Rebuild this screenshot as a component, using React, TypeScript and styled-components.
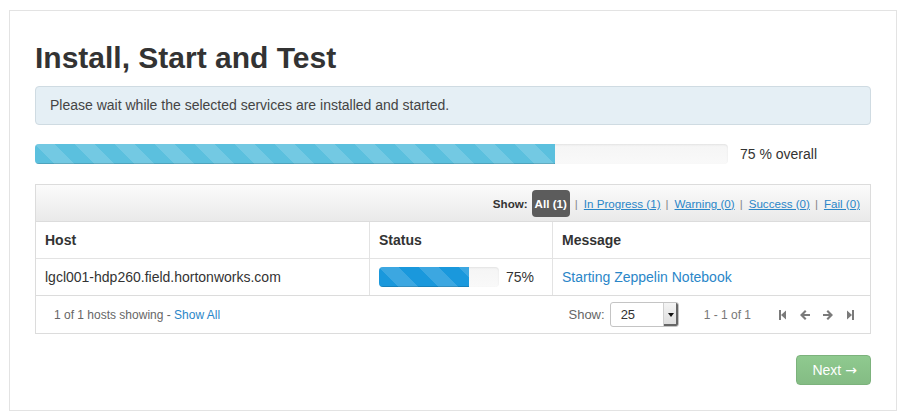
import styled, { createGlobalStyle, css } from 'styled-components';

const GlobalStyle = createGlobalStyle`
  html, body {
    margin: 0;
    padding: 0;
    background: #fff;
  }
  body {
    font-family: "Liberation Sans", Arial, sans-serif;
    font-size: 14px;
    color: #333;
  }
`;

const Page = styled.div`
  padding: 10px 9px 6px 9px;
`;

const Panel = styled.div`
  border: 1px solid #e3e3e3;
  padding: 27px 25px 25px 25px;
  display: flex;
  flex-direction: column;
`;

const Title = styled.h2`
  margin: 0 0 8px 0;
  font-size: 30px;
  line-height: 40px;
  font-weight: bold;
  color: #333;
`;

const Alert = styled.div`
  background: #e5eff5;
  border: 1px solid #cfdbe2;
  border-radius: 4px;
  padding: 8px 14px 9px 14px;
  line-height: 20px;
  font-size: 14px;
  color: #444;
`;

const OverallRow = styled.div`
  display: flex;
  align-items: center;
  margin-top: 19px;
`;

const stripes = css`
  background-image: linear-gradient(
    45deg,
    rgba(255, 255, 255, 0.15) 25%,
    transparent 25%,
    transparent 50%,
    rgba(255, 255, 255, 0.15) 50%,
    rgba(255, 255, 255, 0.15) 75%,
    transparent 75%,
    transparent
  );
  background-size: 40px 40px;
`;

const Track = styled.div<{ $width: number }>`
  width: ${(p) => p.$width}px;
  height: 20px;
  border-radius: 4px;
  overflow: hidden;
  background: linear-gradient(#f5f5f5, #f9f9f9);
  box-shadow: inset 0 1px 2px rgba(0, 0, 0, 0.08);
  flex: none;
`;

const Bar = styled.div<{ $tone: 'info' | 'primary' }>`
  height: 100%;
  ${stripes};
  background-color: ${(p) => (p.$tone === 'info' ? '#5bc0de' : '#1a98dc')};
  box-shadow: inset 0 -1px 0 rgba(0, 0, 0, 0.15);
`;

const OverallLabel = styled.span`
  margin-left: 12px;
  font-size: 14px;
  color: #333;
`;

const Box = styled.div`
  margin-top: 20px;
  border: 1px solid #dcdcdc;
`;

const FilterBar = styled.div`
  display: flex;
  justify-content: flex-end;
  align-items: center;
  height: 36px;
  padding: 0 10px;
  background: linear-gradient(#fbfbfb, #e9e9e9);
  border-bottom: 1px solid #dcdcdc;
  font-size: 11.6px;
`;

const ShowLabel = styled.span`
  font-weight: bold;
  color: #333;
  margin-right: 4px;
`;

const Badge = styled.span`
  background: #5c5c5c;
  color: #fff;
  font-weight: bold;
  border-radius: 4px;
  padding: 0 3px;
  line-height: 27px;
`;

const Sep = styled.span`
  color: #888;
  margin: 0 6px 0 5px;
`;

const FilterLink = styled.a`
  color: #2a86c8;
  text-decoration: underline;
  cursor: pointer;
`;

const Table = styled.table`
  width: 100%;
  border-collapse: collapse;
  table-layout: fixed;
`;

const Th = styled.th<{ $w?: number }>`
  ${(p) => p.$w && `width: ${p.$w}px;`}
  text-align: left;
  font-weight: bold;
  font-size: 14px;
  line-height: 20px;
  padding: 8px 8px 8px 9px;
  border-bottom: 1px solid #e3e3e3;
  & + & {
    border-left: 1px solid #e3e3e3;
  }
`;

const Td = styled.td`
  font-size: 14px;
  line-height: 20px;
  padding: 8px 8px 8px 9px;
  border-bottom: 1px solid #dcdcdc;
  vertical-align: middle;
  & + & {
    border-left: 1px solid #e3e3e3;
  }
`;

const StatusCell = styled.div`
  display: flex;
  align-items: center;
  gap: 7px;
`;

const MsgLink = styled.a`
  color: #2a86c8;
  text-decoration: none;
`;

const Footer = styled.div`
  display: flex;
  align-items: center;
  height: 37px;
  padding: 0 16px 0 18px;
  font-size: 12px;
  color: #666;
`;

const FooterInfo = styled.div`
  flex: 1;
`;

const ShowAll = styled.a`
  color: #2a86c8;
  text-decoration: none;
`;

const SelectWrap = styled.div`
  display: flex;
  align-items: center;
  gap: 5px;
  font-size: 13px;
  color: #666;
`;

const Select = styled.div`
  width: 67px;
  height: 23px;
  border: 1px solid #c4c4c4;
  border-radius: 3px;
  display: flex;
  align-items: stretch;
  background: #fff;
  overflow: hidden;
`;

const SelectValue = styled.span`
  flex: 1;
  padding-left: 10px;
  line-height: 24px;
  font-size: 13px;
  color: #333;
`;

const SelectArrow = styled.span`
  width: 14px;
  background: linear-gradient(#f4f4f4, #dcdcdc);
  border-left: 1px solid #d0d0d0;
  box-shadow: inset -2px -2px 0 #666;
  display: flex;
  align-items: center;
  justify-content: center;
  &::after {
    content: '';
    border-left: 3px solid transparent;
    border-right: 3px solid transparent;
    border-top: 4px solid #111;
  }
`;

const Range = styled.span`
  margin-left: 25px;
  margin-right: 28px;
  color: #777;
  font-size: 12px;
`;

const Pager = styled.div`
  display: flex;
  align-items: center;
  gap: 13px;
  color: #7a7a7a;
  & svg {
    display: block;
  }
`;

const Actions = styled.div`
  display: flex;
  justify-content: flex-end;
  margin-top: 21px;
`;

const NextButton = styled.button`
  font-family: inherit;
  font-size: 14px;
  line-height: 20px;
  color: #fff;
  background: linear-gradient(#8fca8f, #84bc84);
  border: 1px solid #7cb27c;
  border-radius: 4px;
  padding: 4px 13px 4px 15px;
  cursor: default;
  display: flex;
  align-items: center;
  gap: 4px;
`;

const Arrow = styled.span`
  font-family: "DejaVu Sans", sans-serif;
  font-size: 14px;
`;

const IconFirst = () => (
  <svg width="8" height="10" viewBox="0 0 8 10">
    <rect x="0" y="0" width="2" height="10" fill="currentColor" />
    <path d="M2 5 L7 0.5 V9.5 Z" fill="currentColor" />
  </svg>
);

const IconLast = () => (
  <svg width="8" height="10" viewBox="0 0 8 10">
    <rect x="6" y="0" width="2" height="10" fill="currentColor" />
    <path d="M6 5 L1 0.5 V9.5 Z" fill="currentColor" />
  </svg>
);

const IconPrev = () => (
  <svg width="10" height="10" viewBox="0 0 10 10">
    <path d="M0 5 L5 0 L6.5 1.5 L4 4 H10 V6 H4 L6.5 8.5 L5 10 Z" fill="currentColor" />
  </svg>
);

const IconNext = () => (
  <svg width="10" height="10" viewBox="0 0 10 10">
    <path d="M10 5 L5 0 L3.5 1.5 L6 4 H0 V6 H6 L3.5 8.5 L5 10 Z" fill="currentColor" />
  </svg>
);

const filters = [
  { label: 'In Progress (1)' },
  { label: 'Warning (0)' },
  { label: 'Success (0)' },
  { label: 'Fail (0)' },
];

const hosts = [
  {
    name: 'lgcl001-hdp260.field.hortonworks.com',
    progress: 75,
    message: 'Starting Zeppelin Notebook',
  },
];

export default function App() {
  return (
    <>
      <GlobalStyle />
      <Page>
        <Panel>
          <Title>Install, Start and Test</Title>
          <Alert>Please wait while the selected services are installed and started.</Alert>
          <OverallRow>
            <Track $width={693}>
              <Bar $tone="info" style={{ width: '75%' }} />
            </Track>
            <OverallLabel>75 % overall</OverallLabel>
          </OverallRow>

          <Box>
            <FilterBar>
              <ShowLabel>Show:</ShowLabel>
              <Badge>All (1)</Badge>
              {filters.map((f) => (
                <span key={f.label}>
                  <Sep>|</Sep>
                  <FilterLink>{f.label}</FilterLink>
                </span>
              ))}
            </FilterBar>
            <Table>
              <thead>
                <tr>
                  <Th $w={316}>Host</Th>
                  <Th $w={165}>Status</Th>
                  <Th>Message</Th>
                </tr>
              </thead>
              <tbody>
                {hosts.map((h) => (
                  <tr key={h.name}>
                    <Td>{h.name}</Td>
                    <Td>
                      <StatusCell>
                        <Track $width={120}>
                          <Bar $tone="primary" style={{ width: `${h.progress}%` }} />
                        </Track>
                        <span>{h.progress}%</span>
                      </StatusCell>
                    </Td>
                    <Td>
                      <MsgLink>{h.message}</MsgLink>
                    </Td>
                  </tr>
                ))}
              </tbody>
            </Table>
            <Footer>
              <FooterInfo>
                1 of 1 hosts showing - <ShowAll>Show All</ShowAll>
              </FooterInfo>
              <SelectWrap>
                <span>Show:</span>
                <Select>
                  <SelectValue>25</SelectValue>
                  <SelectArrow />
                </Select>
              </SelectWrap>
              <Range>1 - 1 of 1</Range>
              <Pager>
                <IconFirst />
                <IconPrev />
                <IconNext />
                <IconLast />
              </Pager>
            </Footer>
          </Box>

          <Actions>
            <NextButton>
              Next <Arrow>→</Arrow>
            </NextButton>
          </Actions>
        </Panel>
      </Page>
    </>
  );
}
